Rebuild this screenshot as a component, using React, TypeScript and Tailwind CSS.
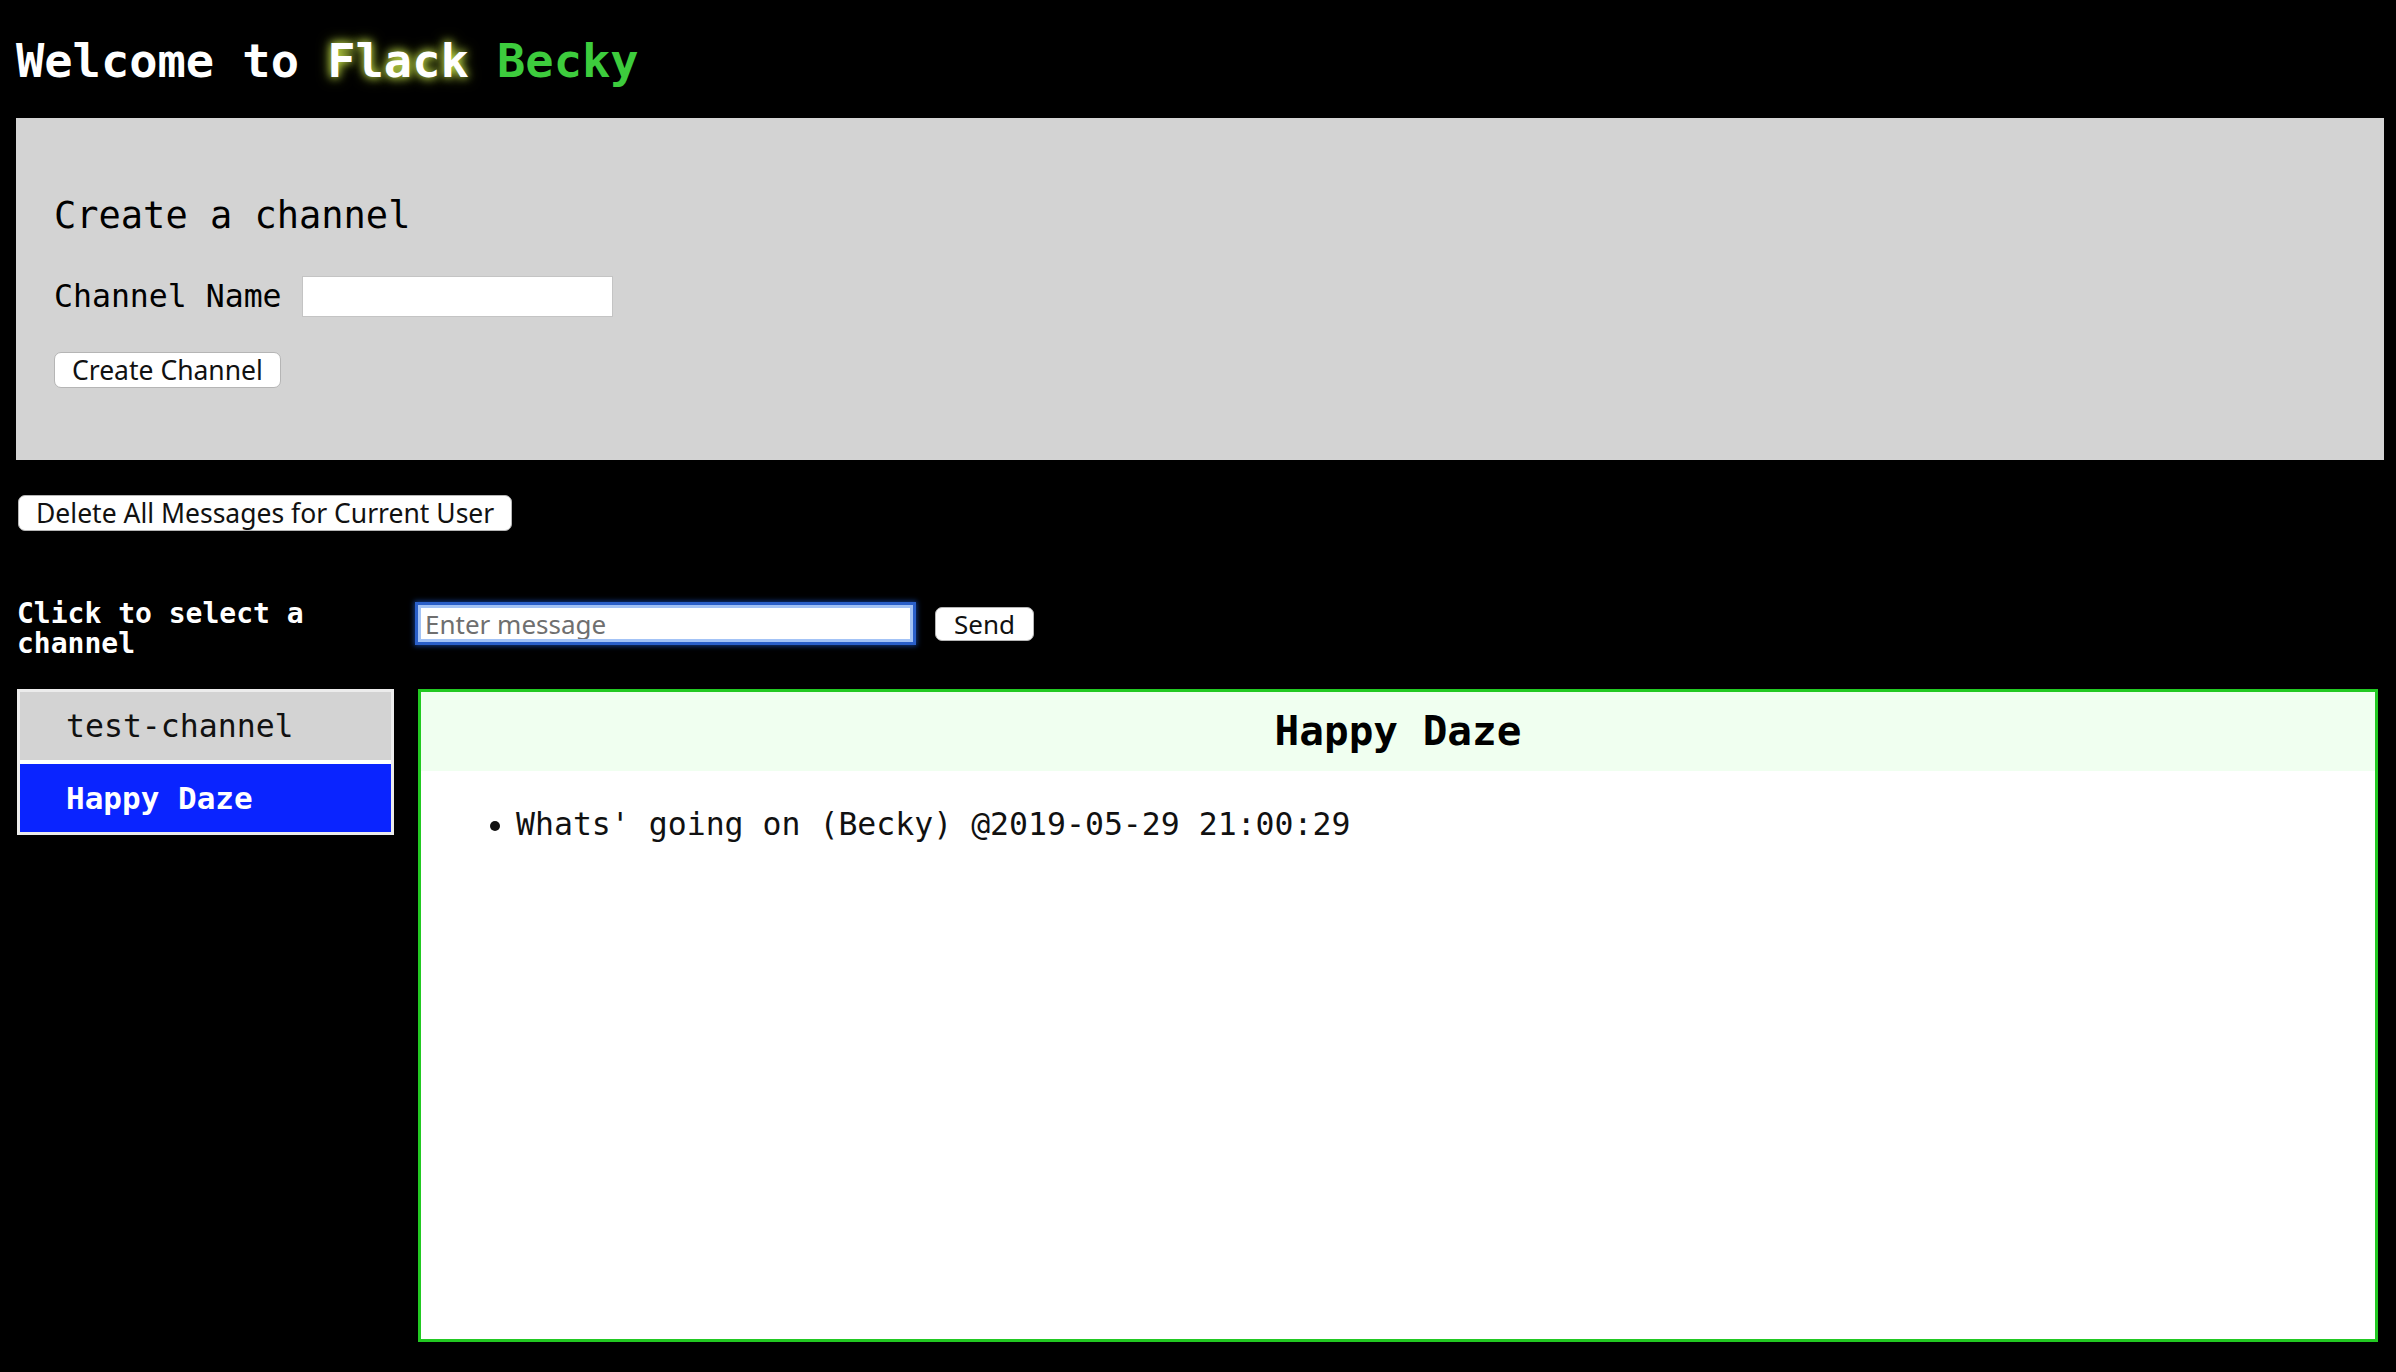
import { useState } from "react";

const channels = ["test-channel", "Happy Daze"];

const messages = ["Whats' going on (Becky) @2019-05-29 21:00:29"];

export default function App() {
  const [current, setCurrent] = useState("Happy Daze");
  const [channelName, setChannelName] = useState("");
  const [message, setMessage] = useState("");

  return (
    <div className="min-h-screen bg-black pb-[30px] pl-4 pr-3 font-['DejaVu_Sans_Mono',monospace] text-black">
      {/* Header */}
      <h1 className="pt-[37px] text-[47px] leading-[47px] font-bold text-white">
        Welcome to{" "}
        <span className="[text-shadow:0_0_8px_#c9e34f,0_0_14px_#8fa82a]">Flack</span>{" "}
        <span className="text-[#3dcc3d]">Becky</span>
      </h1>

      {/* Create channel panel */}
      <div className="mt-[34px] h-[342px] bg-[#d3d3d3] pt-[80px] pl-[38px]">
        <h2 className="text-[37px] leading-[36px] font-normal">Create a channel</h2>
        <div className="mt-[42px] flex items-center gap-[20px]">
          <label className="text-[31.5px] leading-[31px]">Channel Name</label>
          <input
            value={channelName}
            onChange={(e) => setChannelName(e.target.value)}
            className="h-[41px] w-[311px] border border-[#c4c4c4] bg-white px-2 outline-none"
          />
        </div>
        <button className="mt-[35px] h-9 rounded-[7px] border border-[#b5b5b5] bg-white px-[17px] font-['Noto_Sans',sans-serif] text-[26.5px] leading-none text-[#111]">
          Create Channel
        </button>
      </div>

      <button className="mt-[35px] ml-[2px] h-9 rounded-[7px] border border-[#b5b5b5] bg-white px-[17px] font-['Noto_Sans',sans-serif] text-[26.5px] leading-none text-[#111]">
        Delete All Messages for Current User
      </button>

      {/* Main area */}
      <div className="mt-[68px] flex gap-[24px] pr-[6px]">
        {/* Channel column */}
        <div className="flex w-[378px] shrink-0 flex-col pl-px">
          <p className="text-[28px] leading-[30px] font-bold text-white">
            Click to select a channel
          </p>
          <ul className="mt-[30px] flex flex-col gap-[4px] border-[3px] border-[#ececec] bg-white">
            {channels.map((c) => (
              <li
                key={c}
                onClick={() => setCurrent(c)}
                className={
                  c === current
                    ? "flex h-[68px] cursor-pointer items-center bg-[#0a24ff] pl-[46px] text-[31px] leading-[31px] font-bold text-white"
                    : "flex h-[68px] cursor-pointer items-center bg-[#d3d3d3] pl-[46px] text-[31.5px] leading-[31px] text-[#111]"
                }
              >
                {c}
              </li>
            ))}
          </ul>
        </div>

        {/* Messages column */}
        <div className="flex flex-1 flex-col">
          <div className="mt-[6px] flex items-start gap-[22px]">
            <input
              value={message}
              onChange={(e) => setMessage(e.target.value)}
              placeholder="Enter message"
              className="h-[37px] w-[495px] border-[3px] border-[#a3c3f6] bg-white px-[4px] font-['Noto_Sans',sans-serif] text-[26px] leading-none text-black shadow-[0_0_0_3px_#2a5fc9,0_0_5px_4px_#123a85] outline-none placeholder:text-[#6f6f6f]"
            />
            <button className="mt-[2px] h-[34px] rounded-[7px] border border-[#b5b5b5] bg-white px-[18px] font-['Noto_Sans',sans-serif] text-[26px] leading-none text-[#111]">
              Send
            </button>
          </div>

          <div className="mt-[47px] h-[653px] border-[3px] border-[#22c922] bg-white">
            <div className="flex h-[79px] items-center justify-center bg-[#f0fff0]">
              <h3 className="text-[41px] leading-[41px] font-bold">{current}</h3>
            </div>
            <ul className="mt-[38px] list-disc pl-[95px]">
              {messages.map((m) => (
                <li key={m} className="text-[31.5px] leading-[31px] text-[#111]">
                  {m}
                </li>
              ))}
            </ul>
          </div>
        </div>
      </div>
    </div>
  );
}
